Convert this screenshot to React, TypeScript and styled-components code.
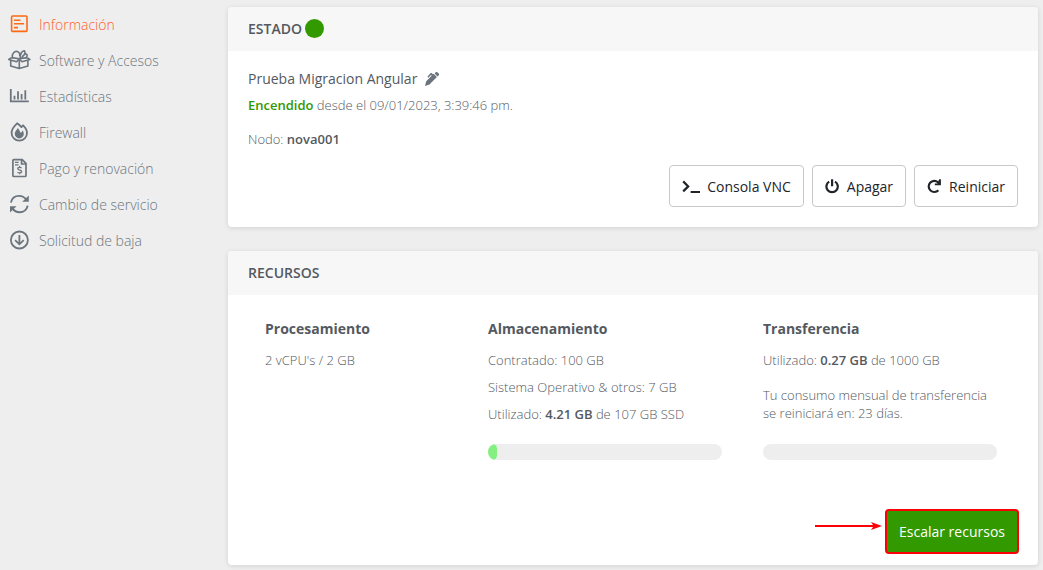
import React from 'react';
import styled, { createGlobalStyle } from 'styled-components';

const GlobalStyle = createGlobalStyle`
  * { box-sizing: border-box; }
  body {
    margin: 0;
    background: #eeeeee;
    color: #54595f;
    font: 300 13px/18px "Open Sans", sans-serif;
  }
  h2, h3, p, ul { margin: 0; padding: 0; }
  strong { font-weight: 600; }
`;

const Page = styled.div`
  display: flex;
  align-items: flex-start;
  padding: 7px 5px 5px 8px;
`;

const Sidebar = styled.nav`
  flex: 0 0 220px;
`;

const Menu = styled.ul`
  list-style: none;
`;

const MenuLink = styled.a<{ $active?: boolean }>`
  display: flex;
  align-items: center;
  gap: 9px;
  height: 36px;
  font-size: 14px;
  text-decoration: none;
  color: ${(p) => (p.$active ? '#ff5e2c' : '#6c757d')};
  svg { flex: none; overflow: visible; color: ${(p) => (p.$active ? '#ff6a13' : '#6c757d')}; }
`;

const Content = styled.main`
  flex: 1;
  min-width: 0;
  display: flex;
  flex-direction: column;
  gap: 24px;
`;

const Card = styled.section`
  background: #fff;
  border-radius: 4px;
  overflow: hidden;
  box-shadow: 0 1px 5px rgba(0, 0, 0, 0.12);
`;

const CardHeader = styled.header`
  display: flex;
  align-items: center;
  gap: 3px;
  height: 44px;
  padding: 0 20px;
  background: #f7f7f7;
`;

const CardTitle = styled.h2`
  font-size: 14px;
  line-height: 20px;
  font-weight: 600;
`;

const StatusDot = styled.span`
  width: 19px;
  height: 19px;
  margin-bottom: 2px;
  border-radius: 50%;
  background: #339900;
`;

const CardBody = styled.div`
  padding: 18px 20px 20px;
`;

const ServerName = styled.div`
  display: flex;
  align-items: center;
  gap: 8px;
  font-size: 14px;
  line-height: 20px;
  font-weight: 400;
`;

const IconButton = styled.button`
  display: flex;
  padding: 0;
  border: 0;
  background: none;
  color: #6c757d;
`;

const Uptime = styled.p`
  margin-top: 7px;
  strong { color: #339900; }
`;

const Node = styled.p`
  margin-top: 16px;
`;

const Actions = styled.div`
  display: flex;
  justify-content: flex-end;
  gap: 8px;
  margin-top: 17px;
`;

const ActionButton = styled.button`
  display: flex;
  align-items: center;
  gap: 7px;
  height: 42px;
  padding: 1px 12px 0;
  border: 1px solid #c8c8c8;
  border-radius: 4px;
  background: #fff;
  color: #212529;
  font: 400 14px/20px "Open Sans", sans-serif;
`;

const ResourceBody = styled.div`
  padding: 24px 20px 11px;
`;

const Resources = styled.div`
  display: grid;
  grid-template-columns: 7fr 9fr 9fr;
  column-gap: 41px;
  padding: 0 21px 0 17px;
`;

const Resource = styled.div`
  display: flex;
  flex-direction: column;
`;

const ResourceTitle = styled.h3`
  margin-bottom: 12px;
  font-size: 14px;
  line-height: 20px;
  font-weight: 700;
`;

const Detail = styled.p`
  margin-bottom: 9px;
`;

const Notice = styled.p`
  margin-top: 8px;
`;

const Meter = styled.div`
  height: 16px;
  margin-top: auto;
  border-radius: 8px;
  background: #eee;
  overflow: hidden;
`;

const MeterFill = styled.div`
  height: 100%;
  border-radius: 8px;
  background: #84f080;
`;

const MeterSpace = styled.div`
  height: 12px;
`;

const ScaleRow = styled.div`
  display: flex;
  justify-content: flex-end;
  align-items: center;
  gap: 2px;
  margin: 49px -1px 0 0;
  svg { margin-bottom: 11px; }
`;

const ScaleButton = styled.button`
  height: 45px;
  padding: 0 12px;
  border: 2px solid #fd0006;
  border-radius: 4px;
  background: #339900;
  color: #fff;
  font: 400 14px/20px "Open Sans", sans-serif;
`;

const Icon = ({ size = 22, view = 22, width = 2, children }: { size?: number; view?: number; width?: number; children: React.ReactNode }) => (
  <svg width={size} height={size} viewBox={`0 0 ${view} ${view}`} fill="none" stroke="currentColor" strokeWidth={width} aria-hidden="true">
    {children}
  </svg>
);

const InfoIcon = () => (
  <Icon width={1.6}>
    <rect x="3.6" y="2" width="15.4" height="15.4" rx="1" />
    <path d="M6 6.2h6.5M6 9.8h10M6 13.6h4" />
  </Icon>
);

const BoxIcon = () => (
  <Icon width={1.6}>
    <path strokeLinejoin="round" d="m3.6 7.6 7.7 1.2 7.7-1.2M3.6 7.6.7 9.4l7.9 2.3 2.7-2.9M19 7.6l2.9 1.8-7.9 2.3-2.7-2.9M2.7 10.4v5.7l8.6 2.3 8.6-2.3v-5.7M11.3 9v9.2" />
    <path strokeLinejoin="round" d="M4.4 7.2C3.9 3.4 6.4.9 9.2 1.5c2.2.5 2.8 2.7 2.5 4.9M12.2 8c.1-3.3 1.2-6.4 3.2-7 1.7-.4 2 1.3 1 3.1L14 7.6c1-2.2 3-4.2 4.5-3.4.9.6.7 2-.1 3.2" />
  </Icon>
);

const ChartIcon = () => (
  <Icon width={1.8}>
    <path d="M2.8 3v12.4h18M6.5 9.8v3.8M10 5.2v8.4M13.6 8v5.6M17.3 4.2v9.4" />
  </Icon>
);

const FireIcon = () => (
  <Icon width={1.8}>
    <path strokeLinejoin="round" d="M9.1 1.3C5.6 4.5 3.6 7.8 3.6 10.9a7.7 7.7 0 0 0 15.4 0c0-2.5-1.6-5.3-3.9-7.6l-1.7 1.8a22 22 0 0 0-4.3-3.8Z" />
    <path fill="currentColor" stroke="none" d="M10 6.1C8.3 8.2 6.8 9.8 6.8 11.9a4.5 4.5 0 0 0 9 0c0-1.1-.4-2.4-1-3.4l-2 2.4L10 6.1Z" />
  </Icon>
);

const InvoiceIcon = () => (
  <Icon width={1.7}>
    <path d="M5.9 1.6h8.3l3.8 3.8v12c0 .7-.4 1.1-1 1.1H5.9c-.6 0-1-.4-1-1.1V2.6c0-.6.4-1 1-1Z" />
    <path d="M7 4.4h3.6M7 6.8h3.6" strokeWidth="1.2" />
    <path d="M13.6 1.8V6h4.2" />
    <path d="M13.6 10.1c-.6-.6-1.3-.8-2.1-.8-1.1 0-1.8.5-1.8 1.3 0 2 4 .9 4 3 0 .9-.8 1.4-1.9 1.4-.9 0-1.8-.3-2.3-.9M11.6 8v1.4M11.6 14.8v1.5" strokeWidth="1.3" />
  </Icon>
);

const SyncIcon = () => (
  <Icon width={1.9}>
    <path d="M2.9 8.6C3.8 4.6 7 1.9 11.2 1.9c3 0 5.2 1.3 6.9 3.5M19.7 11.6c-.9 4-4.2 6.6-8.3 6.6-3 0-5.2-1.3-6.9-3.5" />
    <path fill="currentColor" stroke="none" d="M20.8 1.6v6.2h-6.6ZM2 18.6v-6.4h6.6Z" />
  </Icon>
);

const DownIcon = () => (
  <Icon width={1.8}>
    <circle cx="11.4" cy="10" r="8.5" />
    <path d="M11.4 5v8.8M7.1 10.1l4.3 4.2 4.3-4.2" />
  </Icon>
);

const PencilIcon = () => (
  <svg width="14" height="14" viewBox="0 0 14 14" fill="currentColor" aria-hidden="true">
    <path d="m8.9 2.1 3 3L4.5 12.5 0 14l1.2-4.7 5.5-5.5-.7-.7-2.6 2.6-1-1L5.4 1.3c.5-.5 1-.5 1.5 0l1 .9Z" />
    <path d="M9.6 1.4 10.5.5c.7-.7 1.5-.7 2.2 0l.8.8c.7.7.7 1.5 0 2.2l-.9.9Z" />
  </svg>
);

const TerminalIcon = () => (
  <svg width="18" height="14" viewBox="0 0 18 14" fill="none" stroke="currentColor" strokeWidth="2.2" aria-hidden="true">
    <path d="m1.2 1.4 5 5-5 5M8.6 12H18" />
  </svg>
);

const PowerIcon = () => (
  <Icon size={15} view={15} width={2.2}>
    <path d="M4.2 2.6a5.7 5.7 0 1 0 5.8 0M7.1.2v7" />
  </Icon>
);

const RestartIcon = () => (
  <Icon size={15} view={15} width={2.2}>
    <path d="M11.4 11.2a5.6 5.6 0 1 1-.4-8l1.4 1.5" />
    <path fill="currentColor" stroke="none" d="M13.9.3v5.9H7.8V4.4h2.7L12.1.3Z" />
  </Icon>
);

const ArrowIcon = () => (
  <svg width="68" height="10" viewBox="0 0 68 10" fill="#fd0006" aria-hidden="true">
    <path d="M0 4h58L56 1l11 4-11 4 2-3H0Z" />
  </svg>
);

const menu = [
  { label: 'Información', icon: <InfoIcon /> },
  { label: 'Software y Accesos', icon: <BoxIcon /> },
  { label: 'Estadísticas', icon: <ChartIcon /> },
  { label: 'Firewall', icon: <FireIcon /> },
  { label: 'Pago y renovación', icon: <InvoiceIcon /> },
  { label: 'Cambio de servicio', icon: <SyncIcon /> },
  { label: 'Solicitud de baja', icon: <DownIcon /> },
];

const UsageMeter = ({ label, value }: { label: string; value: number }) => (
  <>
    <MeterSpace />
    <Meter role="progressbar" aria-label={label} aria-valuenow={value} aria-valuemin={0} aria-valuemax={100}>
      <MeterFill style={{ width: `${value}%` }} />
    </Meter>
  </>
);

export default function App() {
  return (
    <>
      <GlobalStyle />
      <Page>
        <Sidebar>
          <Menu>
            {menu.map((item, i) => (
              <li key={item.label}>
                <MenuLink href="#" $active={i === 0}>
                  {item.icon}
                  {item.label}
                </MenuLink>
              </li>
            ))}
          </Menu>
        </Sidebar>
        <Content>
          <Card>
            <CardHeader>
              <CardTitle>ESTADO</CardTitle>
              <StatusDot />
            </CardHeader>
            <CardBody>
              <ServerName>
                Prueba Migracion Angular
                <IconButton aria-label="Editar nombre"><PencilIcon /></IconButton>
              </ServerName>
              <Uptime><strong>Encendido</strong> desde el 09/01/2023, 3:39:46 pm.</Uptime>
              <Node>Nodo: <strong>nova001</strong></Node>
              <Actions>
                <ActionButton><TerminalIcon />Consola VNC</ActionButton>
                <ActionButton><PowerIcon />Apagar</ActionButton>
                <ActionButton><RestartIcon />Reiniciar</ActionButton>
              </Actions>
            </CardBody>
          </Card>
          <Card>
            <CardHeader>
              <CardTitle>RECURSOS</CardTitle>
            </CardHeader>
            <ResourceBody>
              <Resources>
                <Resource>
                  <ResourceTitle>Procesamiento</ResourceTitle>
                  <Detail>2 vCPU's / 2 GB</Detail>
                </Resource>
                <Resource>
                  <ResourceTitle>Almacenamiento</ResourceTitle>
                  <Detail>Contratado: 100 GB</Detail>
                  <Detail>Sistema Operativo &amp; otros: 7 GB</Detail>
                  <Detail>Utilizado: <strong>4.21 GB</strong> de 107 GB SSD</Detail>
                  <UsageMeter label="Almacenamiento utilizado" value={4} />
                </Resource>
                <Resource>
                  <ResourceTitle>Transferencia</ResourceTitle>
                  <Detail>Utilizado: <strong>0.27 GB</strong> de 1000 GB</Detail>
                  <Notice>Tu consumo mensual de transferencia se reiniciará en: 23 días.</Notice>
                  <UsageMeter label="Transferencia utilizada" value={0} />
                </Resource>
              </Resources>
              <ScaleRow>
                <ArrowIcon />
                <ScaleButton>Escalar recursos</ScaleButton>
              </ScaleRow>
            </ResourceBody>
          </Card>
        </Content>
      </Page>
    </>
  );
}
